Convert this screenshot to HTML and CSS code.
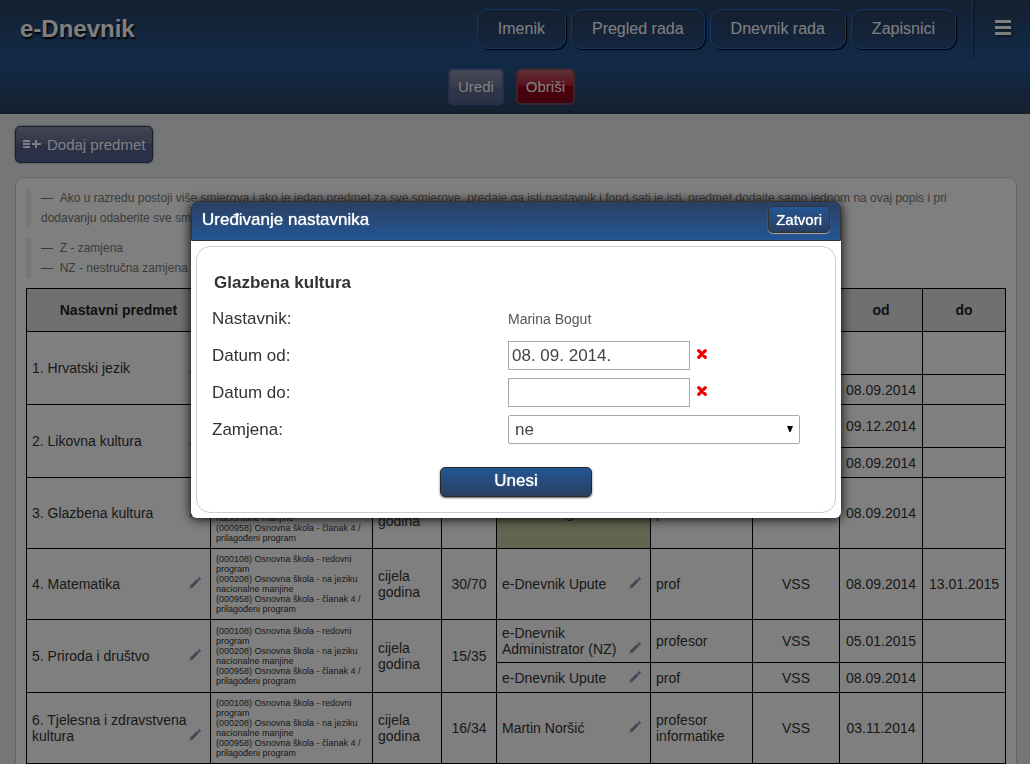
FILE: index.html
```html
<!DOCTYPE html>
<html lang="hr">
<head>
<meta charset="utf-8">
<title>e-Dnevnik</title>
<link rel="stylesheet" href="styles.css">
</head>
<body>
<svg class="sprite" aria-hidden="true">
  <symbol id="pencil" viewBox="0 0 12 12">
    <path d="M0.2 11.8 L1 8.8 L7.4 2.4 L9.6 4.6 L3.2 11 Z" fill="#a4abc0"/>
    <path d="M1.6 9 L8 2.6 L9.4 4 L3 10.4 Z" fill="#7c87a8"/>
    <path d="M8.1 1.8 L9.6 0.4 Q10.4 0 11 0.6 L11.5 1.1 Q12 1.7 11.5 2.4 L10.2 3.9 Z" fill="#8d96b2"/>
  </symbol>
  <symbol id="cross" viewBox="0 0 10 10">
    <path d="M1.7 1.7 L8.3 8.3 M8.3 1.7 L1.7 8.3" stroke="#f00000" stroke-width="3.2" stroke-linecap="round"/>
  </symbol>
</svg>

<header class="header">
  <div class="topbar">
    <h1 class="brand">e-Dnevnik</h1>
    <nav class="nav">
      <a class="nav-link" href="#imenik">Imenik</a>
      <a class="nav-link" href="#pregled">Pregled rada</a>
      <a class="nav-link" href="#dnevnik">Dnevnik rada</a>
      <a class="nav-link" href="#zapisnici">Zapisnici</a>
    </nav>
    <button class="menu" type="button" aria-label="Izbornik">
      <svg width="16" height="15" viewBox="0 0 16 15"><path d="M0 0h16v3H0zM0 6h16v3H0zM0 12h16v3H0z" fill="#fff"/></svg>
    </button>
  </div>
  <div class="actions">
    <button class="btn btn-edit" type="button">Uredi</button>
    <button class="btn btn-delete" type="button">Obriši</button>
  </div>
</header>

<main class="main">
  <button class="btn btn-add" type="button">
    <svg width="18" height="11" viewBox="0 0 18 11"><path d="M0 1h7v2H0zM0 4h7v2H0zM0 7h7v2H0zM9 4h3V1h2v3h4v2h-4v3h-2V6H9z" fill="#fff"/></svg>
    Dodaj predmet
  </button>

  <section class="card">
    <blockquote class="note">
      <small>Ako u razredu postoji više smjerova i ako je jedan predmet za sve smjerove, predaje ga isti nastavnik i fond sati je isti, predmet dodajte samo jednom na ovaj popis i pri dodavanju odaberite sve smjerove</small>
    </blockquote>
    <blockquote class="note">
      <small>Z - zamjena</small>
      <small>NZ - nestručna zamjena</small>
    </blockquote>

    <table class="subjects">
      <colgroup>
        <col class="c-subject"><col class="c-program"><col class="c-period"><col class="c-hours"><col class="c-teacher">
        <col class="c-title"><col class="c-level"><col class="c-date"><col class="c-date">
      </colgroup>
      <thead>
        <tr class="tall"><th>Nastavni predmet</th><th></th><th></th><th></th><th></th><th></th><th></th><th>od</th><th>do</th></tr>
      </thead>
      <tbody>
        <tr class="tall">
          <td rowspan="2"><div class="editable"><span>1. Hrvatski jezik</span><svg class="pencil"><use href="#pencil"/></svg></div></td>
          <td rowspan="2" class="program"></td><td rowspan="2"></td><td rowspan="2"></td>
          <td></td><td></td><td></td><td></td><td></td>
        </tr>
        <tr class="short"><td></td><td></td><td></td><td class="mid">08.09.2014</td><td></td></tr>
        <tr class="tall">
          <td rowspan="2"><div class="editable"><span>2. Likovna kultura</span><svg class="pencil"><use href="#pencil"/></svg></div></td>
          <td rowspan="2" class="program"></td><td rowspan="2"></td><td rowspan="2"></td>
          <td></td><td></td><td></td><td class="mid">09.12.2014</td><td></td>
        </tr>
        <tr class="short"><td></td><td></td><td></td><td class="mid">08.09.2014</td><td></td></tr>
        <tr>
          <td><div class="editable"><span>3. Glazbena kultura</span><svg class="pencil"><use href="#pencil"/></svg></div></td>
          <td class="program">(000108) Osnovna škola - redovni program<br>(000208) Osnovna škola - na jeziku nacionalne manjine<br>(000958) Osnovna škola - članak 4 / prilagođeni program</td>
          <td>cijela godina</td><td class="mid"></td>
          <td class="selected"><div class="editable"><span>Marina Bogut</span></div></td>
          <td>prof</td><td class="mid"></td><td class="mid">08.09.2014</td><td></td>
        </tr>
        <tr>
          <td><div class="editable"><span>4. Matematika</span><svg class="pencil"><use href="#pencil"/></svg></div></td>
          <td class="program">(000108) Osnovna škola - redovni program<br>(000208) Osnovna škola - na jeziku nacionalne manjine<br>(000958) Osnovna škola - članak 4 / prilagođeni program</td>
          <td>cijela godina</td><td class="mid">30/70</td>
          <td><div class="editable"><span>e-Dnevnik Upute</span><svg class="pencil"><use href="#pencil"/></svg></div></td>
          <td>prof</td><td class="mid">VSS</td><td class="mid">08.09.2014</td><td class="mid">13.01.2015</td>
        </tr>
        <tr class="tall">
          <td rowspan="2"><div class="editable"><span>5. Priroda i društvo</span><svg class="pencil"><use href="#pencil"/></svg></div></td>
          <td rowspan="2" class="program">(000108) Osnovna škola - redovni program<br>(000208) Osnovna škola - na jeziku nacionalne manjine<br>(000958) Osnovna škola - članak 4 / prilagođeni program</td>
          <td rowspan="2">cijela godina</td><td rowspan="2" class="mid">15/35</td>
          <td><div class="editable"><span>e-Dnevnik Administrator (NZ)</span><svg class="pencil"><use href="#pencil"/></svg></div></td>
          <td>profesor</td><td class="mid">VSS</td><td class="mid">05.01.2015</td><td></td>
        </tr>
        <tr class="short">
          <td><div class="editable"><span>e-Dnevnik Upute</span><svg class="pencil"><use href="#pencil"/></svg></div></td>
          <td>prof</td><td class="mid">VSS</td><td class="mid">08.09.2014</td><td></td>
        </tr>
        <tr>
          <td><div class="editable"><span>6. Tjelesna i zdravstvena kultura</span><svg class="pencil"><use href="#pencil"/></svg></div></td>
          <td class="program">(000108) Osnovna škola - redovni program<br>(000208) Osnovna škola - na jeziku nacionalne manjine<br>(000958) Osnovna škola - članak 4 / prilagođeni program</td>
          <td>cijela godina</td><td class="mid">16/34</td>
          <td><div class="editable"><span>Martin Noršić</span><svg class="pencil"><use href="#pencil"/></svg></div></td>
          <td>profesor informatike</td><td class="mid">VSS</td><td class="mid">03.11.2014</td><td></td>
        </tr>
      </tbody>
    </table>
  </section>
</main>

<div class="overlay">
  <div class="modal" role="dialog" aria-modal="true" aria-labelledby="modal-title">
    <div class="modal-header">
      <h2 class="modal-title" id="modal-title">Uređivanje nastavnika</h2>
      <button class="modal-close" type="button">Zatvori</button>
    </div>
    <form class="modal-body">
      <h3 class="form-title">Glazbena kultura</h3>
      <div class="field">
        <span>Nastavnik:</span>
        <span class="static">Marina Bogut</span>
      </div>
      <div class="field">
        <label for="from">Datum od:</label>
        <div class="control">
          <input class="input" id="from" type="text" value="08. 09. 2014.">
          <button class="clear" type="button" aria-label="Obriši datum od"><svg width="10" height="10"><use href="#cross"/></svg></button>
        </div>
      </div>
      <div class="field">
        <label for="to">Datum do:</label>
        <div class="control">
          <input class="input" id="to" type="text">
          <button class="clear" type="button" aria-label="Obriši datum do"><svg width="10" height="10"><use href="#cross"/></svg></button>
        </div>
      </div>
      <div class="field">
        <label for="sub">Zamjena:</label>
        <div class="select-wrap">
          <select class="select" id="sub"><option>ne</option><option>da</option></select>
          <svg class="arrow" width="6" height="6" viewBox="0 0 6 6"><path d="M0 0h6L3.5 6h-1z" fill="#000"/></svg>
        </div>
      </div>
      <button class="submit" type="submit">Unesi</button>
    </form>
  </div>
</div>
</body>
</html>
```
FILE: styles.css
```css
* { box-sizing: border-box; }

body {
  margin: 0;
  height: 100vh;
  overflow: hidden;
  background: #ebedf0;
  color: #333;
  font-family: "Liberation Sans", Arial, sans-serif;
  font-size: 14px;
  line-height: 16px;
}

button, input, select { font-family: inherit; }
svg { display: block; }
.sprite { position: absolute; width: 0; height: 0; }

/* Header */
.header { background: linear-gradient(#2a405e, #245592 52%, #2a405c); color: #fff; }
.topbar { display: flex; align-items: stretch; height: 57px; }
.brand {
  flex: 1;
  margin: 0;
  padding-left: 20px;
  font-size: 24px;
  line-height: 57px;
  text-shadow: 1px 2px 2px #000;
}
.nav { display: flex; gap: 5px; padding: 9px 15px 8px 0; }
.nav-link {
  display: flex;
  align-items: center;
  padding: 0 20px;
  border: 1px solid #226cce;
  border-radius: 11px;
  box-shadow: 1px 1px 1px #000;
  background: linear-gradient(#2a4060, #284b7c);
  color: #fff;
  font-size: 16px;
  text-decoration: none;
}
.menu {
  display: flex;
  align-items: center;
  justify-content: center;
  width: 59px;
  padding: 0 0 2px 2px;
  border: 0;
  border-left: 2px solid #255694;
  background: none;
  filter: drop-shadow(1px 1px 1px #0008);
}
.actions { display: flex; justify-content: center; gap: 12px; height: 57px; padding: 11px 7px 9px 0; }

.btn {
  display: inline-flex;
  align-items: center;
  height: 37px;
  padding: 0 8px;
  border: 2px solid #334;
  border-radius: 5px;
  color: #fff;
  font-size: 15px;
}
.btn-edit { border-color: #48629c; background: linear-gradient(#8a90a4, #717a9c 50%, #626b92 50%, #58648c); }
.btn-delete { border-color: #6b5060; background: linear-gradient(#c2606c, #ac2038 50%, #980014 50%, #840a20); }
.btn-add {
  gap: 6px;
  padding: 0 7px;
  border: 1px solid #303c58;
  box-shadow: 0 0 2px #445;
  background: linear-gradient(#868ea4, #646c90 50%, #566090 50%, #56648e);
}

/* Page */
.main { padding: 12px 13px 15px 15px; }
.card { margin-top: 14px; padding: 10px; border: 1px solid #ccc; border-radius: 9px; background: #fff; }
.note {
  margin: 0 0 10px;
  padding: 0 15px 0 10px;
  border-left: 5px solid #eee;
  color: #777;
  line-height: 20px;
}
.note small { display: block; font-size: 12px; }
.note small::before { content: "\2014\00a0\00a0"; }

.subjects { width: 100%; border-collapse: collapse; table-layout: fixed; }
.subjects th, .subjects td { padding: 5px; border: 1px solid #000; text-align: left; vertical-align: middle; }
.subjects th { background: #e1e1e1; color: #222; text-align: center; }
.subjects .mid { padding: 0; text-align: center; }
.subjects .program { font-size: 9px; line-height: 10px; }
.subjects .selected { background: #c2cca2; }
.tall { height: 43px; }
.short { height: 30px; }
.c-subject { width: 184px; }
.c-program { width: 162px; }
.c-period { width: 69px; }
.c-hours { width: 55px; }
.c-teacher { width: 154px; }
.c-title { width: 102px; }
.c-level { width: 87px; }
.c-date { width: 83px; }
.editable { display: flex; align-items: flex-end; padding-right: 4px; }
.editable span { flex: 1; }
.pencil { flex: none; width: 12px; height: 12px; margin-bottom: 3px; }

/* Dialog */
.overlay {
  position: fixed;
  inset: 0;
  display: flex;
  align-items: flex-start;
  justify-content: center;
  padding: 201px 14px 0 16px;
  background: rgba(0, 0, 0, 0.5);
}
.modal {
  width: 100%;
  max-width: 650px;
  padding-bottom: 5px;
  border-radius: 6px;
  background: #fff;
  box-shadow: 0 1px 12px #000;
  font-size: 17px;
  line-height: 20px;
}
.modal-header {
  display: flex;
  align-items: center;
  justify-content: space-between;
  height: 40px;
  padding: 0 10px 3px;
  border: 1px solid #333;
  border-radius: 6px 6px 0 0;
  background: linear-gradient(#2b3f60, #235694);
  color: #fff;
}
.modal-title { margin: 0; font-size: 17px; font-weight: 400; text-shadow: 0 0 1px #fff; }
.modal-close {
  height: 27px;
  padding: 0 7px;
  border: 1px solid #333;
  border-radius: 5px;
  background: linear-gradient(#235694, #2b3f60);
  box-shadow: 0 1px 1px #aaa;
  color: #fff;
  font-size: 15px;
  text-shadow: 0 0 1px #fff;
}
.modal-body {
  display: flex;
  flex-direction: column;
  gap: 8px;
  margin: 5px 5px 0;
  padding: 26px 15px 15px;
  border: 1px solid #ccc;
  border-radius: 14px;
}
.form-title { margin: 0 2px 3px; font-size: 17px; line-height: 20px; }
.field { display: grid; grid-template-columns: 296px minmax(0, 292px); align-items: center; min-height: 29px; }
.static { color: #555; font-size: 14px; }
.control { display: flex; align-items: center; gap: 7px; }
.input, .select {
  height: 29px;
  padding: 0 3px;
  border: 1px solid #a9a9a9;
  background: #fff;
  color: #444;
  font-size: 17px;
}
.input { width: 182px; }
.clear { padding: 0 0 3px; border: 0; background: none; }
.select-wrap { display: grid; align-items: center; }
.select { grid-area: 1 / 1; width: 100%; padding-left: 6px; border-radius: 2px; appearance: none; }
.arrow { grid-area: 1 / 1; justify-self: end; margin: 0 7px 2px 0; pointer-events: none; }
.submit {
  align-self: center;
  width: 152px;
  height: 30px;
  margin-top: 15px;
  padding: 0 0 2px;
  border: 1px solid #2a2a2a;
  border-radius: 5px;
  background: linear-gradient(#235694, #2b3f60);
  box-shadow: 0 1px 2px #555;
  color: #fff;
  font-size: 17px;
  text-shadow: 0 0 1px #fff;
}
```
